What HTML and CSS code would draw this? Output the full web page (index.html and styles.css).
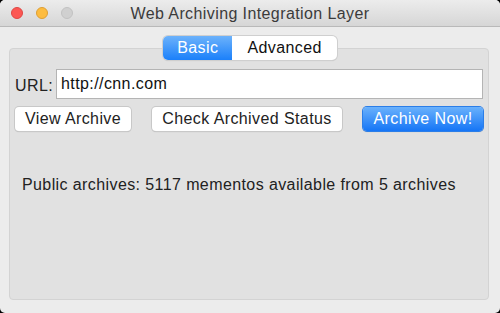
FILE: index.html
```html
<!DOCTYPE html>
<html>
<head>
    <title>Web Archiving Integration Layer</title>
    <link rel="stylesheet" href="styles.css">
</head>
<body>
    <div class="window">
        <div class="title-bar">
            <div class="lights">
                <span class="light red"></span>
                <span class="light yellow"></span>
                <span class="light gray"></span>
            </div>
            <div class="title">Web Archiving Integration Layer</div>
        </div>

        <div class="tabs">
            <span class="tab active">Basic</span>
            <span class="tab">Advanced</span>
        </div>

        <div class="group">
            <div class="url-row">
                <label class="url-label">URL:</label>
                <input class="url-input" type="text" value="http://cnn.com">
            </div>
            <div class="button-row">
                <button class="btn btn-view">View Archive</button>
                <button class="btn btn-check">Check Archived Status</button>
                <button class="btn btn-primary">Archive Now!</button>
            </div>
            <div class="status">Public archives: 5117 mementos available from 5 archives</div>
        </div>
    </div>
</body>
</html>
```

FILE: styles.css
```css
html, body { margin: 0; padding: 0; background: #000; }
body { font-family: "Liberation Sans", Arial, sans-serif; color: #222; letter-spacing: 0.4px; }

.window {
    width: 500px;
    height: 313px;
    background: #ececec;
    border-radius: 5px;
    overflow: hidden;
    display: flex;
    flex-direction: column;
}

.title-bar {
    height: 26px;
    border-bottom: 1px solid #b9b9b9;
    background: linear-gradient(#ececec, #d6d6d6);
    display: flex;
    align-items: center;
}
.lights { display: flex; gap: 13px; padding-left: 11px; }
.light { width: 12px; height: 12px; border-radius: 50%; box-sizing: border-box; }
.light.red { background: #fc5753; border: 1px solid #df4744; }
.light.yellow { background: #fdbc40; border: 1px solid #de9f34; }
.light.gray { background: #d0d0d0; border: 1px solid #c2c2c2; }
.title {
    flex: 1;
    text-align: center;
    font-size: 16px;
    color: #3b3b3b;
    margin-right: 73px;
    margin-top: 1px;
}

.tabs {
    display: flex;
    align-self: center;
    margin-top: 9px;
    height: 24px;
    border-radius: 5px;
    background: #fff;
    box-shadow: 0 0 0 1px #cfcfcf, 0 1px 1px rgba(0,0,0,0.15);
    position: relative;
    z-index: 1;
    font-size: 16px;
}
.tab {
    display: flex;
    align-items: center;
    padding: 0 15px;
    color: #111;
}
.tab.active {
    background: linear-gradient(#6cb2fb, #1b80fa);
    color: #fff;
    border-radius: 5px 0 0 5px;
    padding: 0 14px;
}

.group {
    margin: -12px 11px 13px 9px;
    flex: 1;
    background: #e1e1e1;
    border: 1px solid #d3d3d3;
    border-radius: 4px;
    padding: 20px 5px 0 5px;
}

.url-row { display: flex; align-items: center; gap: 3px; }
.url-label { font-size: 16px; color: #222; padding-top: 4px; }
.url-input {
    flex: 1;
    height: 30px;
    box-sizing: border-box;
    border: 1px solid #b4b4b4;
    background: #fff;
    font-family: inherit;
    letter-spacing: inherit;
    font-size: 16px;
    padding: 0 4px;
    color: #111;
    outline: none;
}

.button-row {
    display: flex;
    justify-content: space-between;
    margin-top: 8px;
}
.btn {
    height: 24px;
    font-family: inherit;
    letter-spacing: inherit;
    font-size: 16px;
    color: #222;
    background: #fff;
    border: none;
    border-radius: 4px;
    box-shadow: 0 0 0 1px #c8c8c8, 0 1px 1px rgba(0,0,0,0.2);
    padding: 0 4px;
}
.btn-view { width: 116px; }
.btn-check { width: 190px; }
.btn-primary {
    width: 120px;
    color: #fff;
    background: linear-gradient(#6ab1fc, #1575f6);
    box-shadow: 0 0 0 1px #2b7ee8, 0 1px 1px rgba(0,0,0,0.2);
}

.status {
    margin-top: 45px;
    padding-left: 7px;
    font-size: 16px;
    color: #222;
}
```
